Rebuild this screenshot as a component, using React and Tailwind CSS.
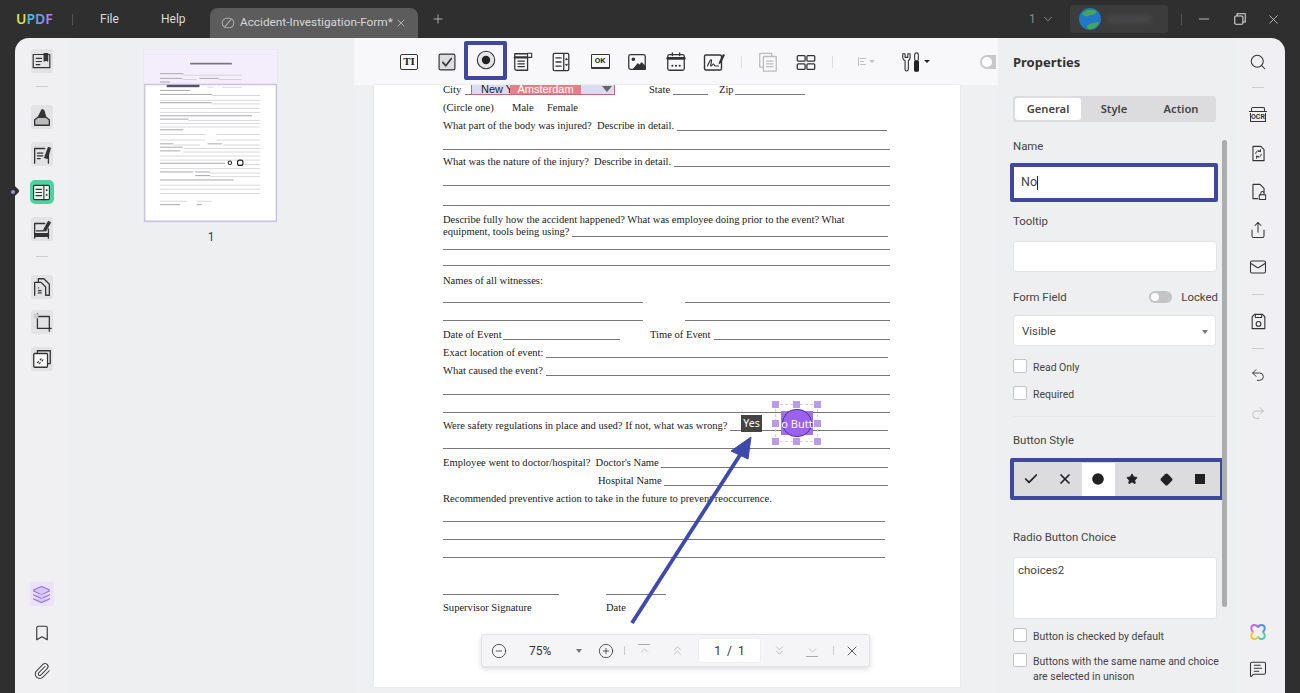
import React from "react";
import { X, Plus, Minus, ChevronDown, Check, Search, Undo2, Redo2, Bookmark, Paperclip, Layers, CirclePlus, CircleMinus, ChevronsUp, ChevronsDown, Share, Mail, MessageSquareText, Star, Diamond, Circle } from "lucide-react";

function Svg({ size = 24, children, className = "" }) {
  return (
    <svg width={size} height={size} viewBox="0 0 24 24" fill="none" stroke="#333" strokeWidth="1.4" strokeLinejoin="round" strokeLinecap="round" className={className}>
      {children}
    </svg>
  );
}

const toolbarIcons = {
  check: (
    <Svg size={20}>
      <rect x="2.5" y="2.5" width="19" height="19" rx="2" fill="#ddd" />
      <path d="M7 12.5l3.5 4L17 8" strokeWidth="2" />
    </Svg>
  ),
  radio: (
    <Svg size={22}>
      <circle cx="12" cy="12" r="9.5" fill="#e6e6e6" strokeWidth="1.2" />
      <circle cx="12" cy="12" r="4.6" fill="#222" stroke="none" />
    </Svg>
  ),
  combo: (
    <Svg size={22}>
      <path d="M3 3h14v18H5a2 2 0 0 1-2-2z" />
      <path d="M3 7h14" strokeWidth="2.4" />
      <rect x="17" y="2.5" width="4.5" height="4.5" fill="#fff" strokeWidth="1.2" />
      <path d="M6.5 11h7M6.5 14h7M6.5 17h7" />
    </Svg>
  ),
  list: (
    <Svg size={22}>
      <rect x="3.5" y="2.5" width="17" height="19" rx="1.5" />
      <path d="M15 3v18" />
      <path d="M6.5 7.5h5.5M6.5 12h5.5M6.5 16.5h5.5" />
      <path d="M17.8 8l-1 1.5h2zM17.8 16l-1-1.5h2z" fill="#333" strokeWidth="0.8" />
    </Svg>
  ),
  image: (
    <Svg size={22}>
      <rect x="3" y="4" width="18" height="16" rx="2" />
      <circle cx="8" cy="9" r="1.3" fill="#333" />
      <path d="M8 20l5-6 2 2 2-3 4 4v3z" fill="#333" />
    </Svg>
  ),
  date: (
    <Svg size={22}>
      <rect x="3" y="4" width="18" height="17" rx="2" />
      <path d="M3 8h18" strokeWidth="3" />
      <path d="M8 2v3M16 2v3" />
      <path d="M8 16h.1M12 16h.1M16 16h.1" strokeWidth="2.2" />
    </Svg>
  ),
  sign: (
    <Svg size={24}>
      <rect x="2.5" y="5" width="17" height="15" rx="1.5" />
      <path d="M5.5 16c2-5 3.5-7 4-6s-1.5 6-.5 6 1.5-2 2.5-2 .5 2 2 2h3" strokeWidth="1.2" />
      <path d="M17 12l4-8 2 1-4 8-2.5 1.5z" fill="#333" stroke="none" />
    </Svg>
  ),
  copy: (
    <Svg size={22} className="opacity-30">
      <rect x="3" y="2.5" width="13" height="15" />
      <rect x="7" y="6" width="14" height="16" fill="#f8f8fa" />
      <path d="M10.5 11h7M10.5 14h7M10.5 17h7" />
    </Svg>
  ),
  grid: (
    <Svg size={22}>
      <rect x="2.5" y="5" width="8.5" height="6" rx="1" />
      <rect x="13" y="5" width="8.5" height="6" rx="1" />
      <rect x="2.5" y="14" width="8.5" height="6" rx="1" />
      <rect x="13" y="14" width="8.5" height="6" rx="1" />
    </Svg>
  ),
};

function Tool({ className = "", children }) {
  return <div className={`flex shrink-0 items-center justify-center ${className}`}>{children}</div>;
}

function Toolbar() {
  return (
    <div className="relative flex h-[47px] shrink-0 items-center bg-[#f8f8fa] pl-[43px]">
      <Tool className="w-6">
        <div className="flex h-[16px] w-[18px] items-center justify-center rounded-[2px] border border-[#333] font-['Liberation_Serif',serif] text-[11px] leading-none font-bold text-[#222]">TI</div>
      </Tool>
      <Tool className="ml-[14px] w-6">{toolbarIcons.check}</Tool>
      <Tool className="mt-[-3px] ml-[5px] h-[39px] w-[43px] rounded-[2px] border-[4px] border-[#3f479f]">{toolbarIcons.radio}</Tool>
      <Tool className="ml-[4px] w-6">{toolbarIcons.combo}</Tool>
      <Tool className="ml-[14px] w-6">{toolbarIcons.list}</Tool>
      <Tool className="ml-[15px] w-6">
        <div className="flex h-[15px] w-[19px] items-center justify-center rounded-[1px] border border-b-2 border-[#333] text-[8px] leading-none font-semibold text-[#222]">OK</div>
      </Tool>
      <Tool className="ml-[13px] w-6">{toolbarIcons.image}</Tool>
      <Tool className="ml-[15px] w-6">{toolbarIcons.date}</Tool>
      <Tool className="ml-[14px] w-6">{toolbarIcons.sign}</Tool>
      <div className="ml-[15px] h-[12px] w-px bg-[#ddd]" />
      <Tool className="ml-[14px] w-6">{toolbarIcons.copy}</Tool>
      <Tool className="ml-[14px] w-6">{toolbarIcons.grid}</Tool>
      <div className="ml-[14px] h-[12px] w-px bg-[#ddd]" />
      <Tool className="ml-[21px] w-6 gap-[3px] opacity-30">
        <div className="flex flex-col gap-[2px] border-l border-[#444] py-px pl-px">
          <div className="h-px w-[6px] bg-[#444]" />
          <div className="h-px w-[4px] bg-[#444]" />
          <div className="h-px w-[6px] bg-[#444]" />
        </div>
        <div className="h-0 w-0 border-x-[3px] border-t-[3px] border-x-transparent border-t-[#444]" />
      </Tool>
      <Tool className="ml-[22px] w-[30px] gap-[2px]">
        <Svg size={24}>
          <path d="M3 3v4a4 4 0 0 0 2.5 3.5V20a1.8 1.8 0 0 0 3.6 0V10.5A4 4 0 0 0 11 7V3L8.5 3v4h-3V3z" strokeWidth="1.2" />
          <rect x="16" y="2" width="4" height="9" rx="2" strokeWidth="1.2" />
          <rect x="16" y="11" width="4" height="11" rx="1" fill="#222" stroke="#222" />
        </Svg>
        <div className="h-0 w-0 border-x-[3px] border-t-[3px] border-x-transparent border-t-[#222]" />
      </Tool>
      <div className="ml-[50px] flex h-[14px] w-[16px] items-center rounded-l-full bg-[#c9c9cb] pl-[2px]">
        <div className="h-[10px] w-[10px] rounded-full bg-white" />
      </div>
    </div>
  );
}

function Rule({ className = "" }) {
  return <div className={`h-px bg-[#777] ${className}`} />;
}

function U({ className = "" }) {
  return <span className={`h-px bg-[#777] ${className || "flex-1"}`} />;
}

function Row({ className = "", children }) {
  return <div className={`flex h-3 items-end whitespace-pre leading-[10px] ${className}`}>{children}</div>;
}

function DocPage() {
  return (
    <div className="relative ml-5 h-[602px] w-[586px] overflow-hidden bg-white pl-[69px] font-['Liberation_Serif',serif] text-[10.55px] text-[#222] shadow-[0_0_2px_#ddd]">
      <div className="w-[447px]">
        <Row className="mt-[-2px]">
          <span className="w-[22px]">City</span>
          <U className="w-[6px]" />
          <div className="flex h-[11px] w-[144px] items-center border-x border-b border-[#c8667a] bg-[#d9dcf2] font-['Liberation_Sans',sans-serif] text-[11px] leading-none">
            <span className="ml-[9px] w-[29px] overflow-hidden text-[#222]">New Y</span>
            <span className="flex h-full w-[71px] items-center justify-center bg-[#e77f88] text-[#fff]">Amsterdam</span>
            <div className="ml-[21px] h-0 w-0 border-x-[5px] border-t-[6px] border-x-transparent border-t-[#666]" />
          </div>
          <span className="ml-[34px] w-[24px]">State</span>
          <U className="w-[35px]" />
          <span className="ml-[11px] w-[16px]">Zip</span>
          <U className="w-[70px]" />
        </Row>
        <Row className="mt-[6px]">
          <span className="w-[69px]">(Circle one)</span>
          <span className="w-[35px]">Male</span>
          <span>Female</span>
        </Row>
        <Row className="mt-[6px]">
          <span>What part of the body was injured?  Describe in detail. </span>
          <U className="mr-[3px] flex-1" />
        </Row>
        <Rule className="mt-[18px]" />
        <Row className="mt-[5px]">
          <span>What was the nature of the injury?  Describe in detail. </span>
          <U />
        </Row>
        <Rule className="mt-[18px]" />
        <Rule className="mt-[19px] bg-[#444]" />
        <Row className="mt-[7px]">
          <span>Describe fully how the accident happened? What was employee doing prior to the event? What</span>
        </Row>
        <Row>
          <span>equipment, tools being using? </span>
          <U className="mr-[2px] flex-1" />
        </Row>
        <Rule className="mt-[12px]" />
        <Rule className="mt-[15px]" />
        <Row className="mt-[8px]">
          <span>Names of all witnesses:</span>
        </Row>
        <div className="mt-[16px] flex gap-[42px]">
          <Rule className="w-[200px]" />
          <Rule className="flex-1" />
        </div>
        <div className="mt-[17px] flex gap-[42px]">
          <Rule className="w-[200px]" />
          <Rule className="flex-1" />
        </div>
        <Row className="mt-[7px]">
          <span className="w-[60px]">Date of Event </span>
          <U className="w-[117px]" />
          <span className="ml-[30px] w-[64px]">Time of Event </span>
          <U />
        </Row>
        <Row className="mt-[6px]">
          <span>Exact location of event: </span>
          <U className="mr-[2px] flex-1" />
        </Row>
        <Row className="mt-[6px]">
          <span>What caused the event? </span>
          <U />
        </Row>
        <Rule className="mt-[18px]" />
        <Rule className="mt-[17px]" />
        <Row className="mt-[6px]">
          <span>Were safety regulations in place and used? If not, what was wrong? </span>
          <U className="mr-[2px] flex-1" />
        </Row>
        <Rule className="mt-[17px]" />
        <Row className="mt-[7px]">
          <span>Employee went to doctor/hospital?  Doctor's Name </span>
          <U className="mr-[2px] flex-1" />
        </Row>
        <Row className="mt-[6px]">
          <span className="ml-[155px]">Hospital Name </span>
          <U className="mr-[2px] flex-1" />
        </Row>
        <Row className="mt-[6px]">
          <span>Recommended preventive action to take in the future to prevent reoccurrence.</span>
        </Row>
        <Rule className="mt-[17px] mr-[5px]" />
        <Rule className="mt-[17px] mr-[5px]" />
        <Rule className="mt-[17px] mr-[5px]" />
        <div className="mt-[36px] flex gap-[47px]">
          <Rule className="w-[116px]" />
          <Rule className="w-[60px]" />
        </div>
        <Row className="mt-[6px]">
          <span className="w-[163px]">Supervisor Signature</span>
          <span>Date</span>
        </Row>
      </div>
      <FieldOverlay />
    </div>
  );
}

function Handle({ className }) {
  return <div className={`absolute h-[7px] w-[7px] bg-[#bb9be8] ${className}`} />;
}

// the Yes label and the selected radio button sit on top of the page
function FieldOverlay() {
  return (
    <>
      <div className="absolute top-[330px] left-[367px] flex h-[17px] w-[21px] items-center justify-center bg-[#444] font-['Noto_Sans',sans-serif] text-[10.5px] leading-none text-white">Yes</div>
      <div className="absolute top-[319px] left-[401px] h-[38px] w-[43px] border border-dashed border-[#d9c9f3]" />
      <Handle className="top-[316px] left-[398px]" />
      <Handle className="top-[316px] left-[419px]" />
      <Handle className="top-[316px] left-[440px]" />
      <Handle className="top-[335px] left-[398px]" />
      <Handle className="top-[335px] left-[440px]" />
      <Handle className="top-[353px] left-[398px]" />
      <Handle className="top-[353px] left-[419px]" />
      <Handle className="top-[353px] left-[440px]" />
      <div className="absolute top-[326px] left-[407px] h-[24px] w-[32px] bg-[#a070e8]" />
      <div className="absolute top-[324px] left-[408px] h-[28px] w-[30px] rounded-full border border-[#4a3490] bg-[#9a62ee]" />
      <div className="absolute top-[326px] left-[407px] flex h-[24px] w-[32px] items-center justify-center overflow-hidden font-['Noto_Sans',sans-serif] text-[11px] leading-none text-white">
        <span className="whitespace-nowrap">o Butt</span>
      </div>
    </>
  );
}

function ArrowOverlay() {
  return (
    <svg width="140" height="200" viewBox="0 0 140 200" className="absolute top-[350px] left-[265px]">
      <path d="M13 188L121 20" stroke="#3d49ad" strokeWidth="3.8" />
      <path d="M132 2L112 16 129 24z" fill="#3d49ad" stroke="#3d49ad" strokeWidth="1" />
    </svg>
  );
}

function ZoomBar() {
  return (
    <div className="absolute top-[549px] left-[127px] flex h-[33px] w-[389px] items-center rounded-[3px] border border-[#e3e3e5] bg-[#f5f5f7] text-[#333] shadow-[0_2px_5px_rgba(0,0,0,0.15)]">
      <CircleMinus size={16} strokeWidth={1.2} className="ml-[9px]" />
      <span className="ml-[22px] w-[24px] text-[12px]">75%</span>
      <div className="ml-[23px] h-0 w-0 border-x-[3px] border-t-[4px] border-x-transparent border-t-[#777]" />
      <CirclePlus size={16} strokeWidth={1.2} className="ml-[16px]" />
      <div className="ml-[10px] h-[9px] w-px bg-[#ccc]" />
      <div className="ml-[12px] flex w-[14px] flex-col items-center text-[#aaa]">
        <div className="h-px w-[12px] bg-[#aaa]" />
        <ChevronDown size={13} strokeWidth={1.2} className="mt-[-1px] rotate-180" />
      </div>
      <ChevronsUp size={15} strokeWidth={1.2} className="ml-[19px] text-[#aaa]" />
      <div className="ml-[13px] flex h-[25px] w-[63px] items-center justify-center gap-[6px] rounded-[3px] border border-[#eee] bg-white text-[12px]">
        <span>1</span>
        <span>/</span>
        <span>1</span>
      </div>
      <ChevronsDown size={15} strokeWidth={1.2} className="ml-[11px] text-[#aaa]" />
      <div className="ml-[18px] flex w-[14px] flex-col items-center text-[#aaa]">
        <ChevronDown size={13} strokeWidth={1.2} />
        <div className="mt-[-1px] h-px w-[12px] bg-[#aaa]" />
      </div>
      <div className="ml-[14px] h-[9px] w-px bg-[#ccc]" />
      <X size={16} strokeWidth={1.2} className="ml-[10px]" />
    </div>
  );
}

function RailBtn({ className = "", children }) {
  return <div className={`flex h-[24px] w-[22px] items-center justify-center rounded-[3px] bg-[#e3e3e5] ${className}`}>{children}</div>;
}

function LeftRail() {
  return (
    <div className="flex w-[53px] shrink-0 flex-col items-center bg-[#f0f0f2]">
      <RailBtn className="mt-[11px]">
        <Svg size={21}>
          <path d="M2.5 4h19v15h-19z" />
          <path d="M6 8.5h6M6 12h6M6 15.5h4" />
          <path d="M15 3v8.5l2-1.5 2 1.5V3z" fill="#333" />
        </Svg>
      </RailBtn>
      <div className="mt-[13px] h-px w-[12px] bg-[#ccc]" />
      <RailBtn className="mt-[18px]">
        <Svg size={22}>
          <path d="M4 21v-6l4-3h8l4 3v6z" fill="#bbb" />
          <path d="M8 12l4-8 2 1 2 7z" fill="#333" />
        </Svg>
      </RailBtn>
      <RailBtn className="mt-[13px]">
        <Svg size={22}>
          <path d="M4 22V6h11M19 12v10" />
          <path d="M7 11h6M7 14h6M7 17h3" />
          <path d="M15 16l4-11 2 .7-3 11z" fill="#333" />
        </Svg>
      </RailBtn>
      <div className="mt-[14px] flex h-[24px] w-[24px] items-center justify-center rounded-[5px] bg-[#4ed1a0]">
        <Svg size={19}>
          <rect x="2" y="3" width="20" height="18" rx="1.5" fill="#e6f7ef" />
          <path d="M15 3v18M5 8h7M5 12h7M5 16h7" />
          <path d="M18.5 9h.1M18.5 15h.1" strokeWidth="2.2" />
        </Svg>
      </div>
      <RailBtn className="mt-[13px]">
        <Svg size={22}>
          <path d="M4 22V6h11M19 12v10" />
          <path d="M6 14h8" />
          <path d="M4 17h15v3H4z" fill="#333" />
          <path d="M14 13l5-9 2 1-5 9z" fill="#333" />
        </Svg>
      </RailBtn>
      <div className="mt-[15px] h-px w-[12px] bg-[#ccc]" />
      <RailBtn className="mt-[18px]">
        <Svg size={22}>
          <path d="M8 7V3h6l6 6v12h-3" />
          <path d="M4 21V7h7l5 5v9" />
          <path d="M8 13h.1M8 16h3M8 18.5h3" />
        </Svg>
      </RailBtn>
      <RailBtn className="mt-[11px]">
        <Svg size={22}>
          <path d="M4 6h16v16M7 3v16h15" />
          <rect x="3" y="3" width="5" height="5" fill="#ccc" stroke="none" />
        </Svg>
      </RailBtn>
      <RailBtn className="mt-[13px]">
        <Svg size={22}>
          <path d="M7 6V3h14v14h-3" />
          <rect x="3" y="6" width="15" height="15" rx="1" fill="#fff" />
          <path d="M7 16l1-1M10 13l1-1M9 17l1-1M12 14l1-1" />
        </Svg>
      </RailBtn>
      <div className="mt-auto flex h-[24px] w-[24px] items-center justify-center rounded-[3px] bg-[#ebe1fa]">
        <Layers size={19} strokeWidth={1.3} className="fill-[#d9c6f5] text-[#8e70c9]" />
      </div>
      <Bookmark size={18} strokeWidth={1.5} className="mt-[18px] text-[#333]" />
      <Paperclip size={18} strokeWidth={1.4} className="mt-[20px] mb-[13px] text-[#444]" />
    </div>
  );
}

// x1, x2, y in the thumbnail's own units, dark = printed words, light = form lines
const thumbText = [
  [90, 160, 102], [90, 155, 116], [208, 265, 116], [90, 120, 127], [90, 180, 152], [90, 245, 164], [90, 245, 189],
  [90, 365, 228], [90, 175, 238], [90, 160, 270], [90, 130, 312], [232, 275, 312], [90, 158, 322], [90, 150, 333],
  [90, 285, 370], [90, 190, 396], [195, 240, 396], [195, 240, 407], [90, 310, 420], [90, 150, 494], [200, 215, 494],
];
const thumbLines = [
  [160, 335, 106], [155, 200, 119], [265, 335, 119], [232, 250, 142], [275, 335, 142], [245, 390, 167], [90, 390, 181],
  [245, 390, 192], [90, 390, 205], [90, 390, 217], [175, 390, 241], [90, 390, 250], [90, 390, 261], [90, 225, 283],
  [258, 390, 283], [90, 225, 300], [258, 390, 300], [130, 210, 315], [278, 390, 315], [160, 390, 325], [160, 390, 336],
  [90, 390, 348], [90, 390, 360], [340, 390, 373], [90, 390, 386], [240, 390, 399], [240, 390, 410], [90, 390, 435],
  [90, 390, 447], [90, 390, 460], [90, 170, 483], [200, 245, 483],
];

function Thumbs() {
  return (
    <div className="flex w-[286px] shrink-0 flex-col items-center bg-[#eeeff1] pt-[11px]">
      <div className="ml-[-1px] bg-[#e9e6f6] p-[1px]">
        <svg width="133" height="172" viewBox="42 32 398 514" className="block">
          <rect x="42" y="32" width="398" height="514" fill="#fff" />
          <rect x="42" y="32" width="398" height="103" fill="#f4eefc" />
          <path d="M44 135H438V544H44z" fill="none" stroke="#c9c2e4" strokeWidth="4" />
          <rect x="180" y="70" width="125" height="5" fill="#77737f" />
          {thumbText.map((l, i) => (
            <rect key={i} x={l[0]} y={l[2] - 1} width={l[1] - l[0]} height="3" fill="#a9a9ad" />
          ))}
          {thumbLines.map((l, i) => (
            <rect key={i} x={l[0]} y={l[2]} width={l[1] - l[0]} height="2" fill="#c8c8cb" />
          ))}
          <rect x="110" y="136" width="98" height="7" fill="#55536a" />
          <circle cx="299" cy="369" r="5" fill="none" stroke="#222" strokeWidth="3" />
          <rect x="322" y="361" width="16" height="16" rx="6" fill="none" stroke="#222" strokeWidth="3.5" />
        </svg>
      </div>
      <span className="mt-[6px] text-[12px] leading-4 text-[#444]">1</span>
    </div>
  );
}

function Checkbox({ label, className = "" }) {
  return (
    <div className={`flex items-start gap-[6px] ${className}`}>
      <div className="h-[14px] w-[14px] shrink-0 rounded-[2px] border border-[#c4c4c6] bg-white" />
      <span className="pt-px text-[10.45px] leading-[15px] text-[#444]">{label}</span>
    </div>
  );
}

function StyleBtn({ active, children }) {
  return <div className={`flex h-[33px] w-[33.8px] items-center justify-center ${active ? "bg-white" : ""}`}>{children}</div>;
}

function Properties() {
  return (
    <div className="relative flex w-[237px] shrink-0 flex-col bg-[#eeeff1] pl-[15px] text-[#444]">
      <div className="mt-[14px] font-['Noto_Sans',sans-serif] text-[13px] leading-[20px] font-bold text-[#333]">Properties</div>
      <div className="mt-[24px] flex h-[26px] w-[203px] items-center rounded-[3px] bg-[#dcdcde] pl-[2px] font-['Noto_Sans',sans-serif] text-[11.2px] font-semibold text-[#444]">
        <div className="flex h-[22px] w-[66px] items-center justify-center rounded-[3px] bg-white">General</div>
        <div className="w-[66px] text-center">Style</div>
        <div className="w-[68px] text-center">Action</div>
      </div>
      <div className="mt-[16px] text-[11.4px] leading-4">Name</div>
      <div className="mt-[9px] ml-[-3px] flex h-[39px] w-[208px] items-center rounded-[2px] border-[4px] border-[#3f479f] bg-white pl-[7px] text-[12.5px] text-[#444]">
        <span>No</span>
        <div className="h-[14px] w-px bg-[#222]" />
      </div>
      <div className="mt-[11px] text-[11.4px] leading-4">Tooltip</div>
      <div className="mt-[12px] h-[31px] w-[204px] rounded-[3px] border border-[#e4e4e6] bg-white" />
      <div className="mt-[17px] flex w-[205px] items-center text-[11.4px] leading-4">
        <span>Form Field</span>
        <div className="mr-[9px] ml-auto flex h-[12px] w-[23px] items-center rounded-full bg-[#c4c4c6] pl-[2px]">
          <div className="h-[8px] w-[8px] rounded-full bg-white" />
        </div>
        <span>Locked</span>
      </div>
      <div className="mt-[10px] flex h-[31px] w-[203px] items-center justify-between rounded-[3px] border border-[#e4e4e6] bg-white pt-[3px] pr-[7px] pl-[8px] text-[11.4px]">
        <span>Visible</span>
        <div className="h-0 w-0 border-x-[3px] border-t-[4px] border-x-transparent border-t-[#777]" />
      </div>
      <Checkbox label="Read Only" className="mt-[13px]" />
      <Checkbox label="Required" className="mt-[11px]" />
      <div className="mt-[14px] h-px w-[203px] bg-[#e8e8ea]" />
      <div className="mt-[15px] text-[11.4px] leading-4">Button Style</div>
      <div className="mt-[10px] ml-[-3px] flex h-[42px] w-[214px] items-center rounded-[2px] border-[4px] border-[#3f479f] bg-[#dcdcde] text-[#222]">
        <StyleBtn><Check size={16} strokeWidth={2.6} /></StyleBtn>
        <StyleBtn><X size={16} strokeWidth={2.6} /></StyleBtn>
        <StyleBtn active><Circle size={14} fill="currentColor" strokeWidth={0} /></StyleBtn>
        <StyleBtn><Star size={12} fill="currentColor" /></StyleBtn>
        <StyleBtn><Diamond size={13} fill="currentColor" /></StyleBtn>
        <StyleBtn><div className="h-[10px] w-[10px] bg-current" /></StyleBtn>
      </div>
      <div className="mt-[29px] text-[11.4px] leading-4">Radio Button Choice</div>
      <div className="mt-[12px] h-[62px] w-[204px] rounded-[3px] border border-[#e4e4e6] bg-white pt-[4px] pl-[4px] text-[11.5px] leading-4">choices2</div>
      <Checkbox label="Button is checked by default" className="mt-[9px]" />
      <Checkbox label={<>Buttons with the same name and choice<br />are selected in unison</>} className="mt-[9px]" />
      <div className="absolute top-[102px] left-[224px] h-[467px] w-[5px] rounded-full bg-[#acacae]" />
    </div>
  );
}

function RightRail() {
  const ic = "text-[#333]";
  return (
    <div className="flex w-[50px] shrink-0 flex-col items-center bg-[#f0f0f2] pr-[4px]">
      <Search size={18} strokeWidth={1.4} className={`mt-[15px] ${ic}`} />
      <div className="mt-[16px] h-px w-[12px] bg-[#ccc]" />
      <div className="mt-[19px] flex flex-col items-center">
        <div className="h-[4px] w-[14px] rounded-t-[2px] border-x border-t border-[#333]" />
        <div className="h-px w-[18px] bg-[#333]" />
        <div className="mt-px flex h-[9px] w-[16px] items-center justify-center border-x border-b border-[#333] text-[7px] leading-none font-bold text-[#333]">OCR</div>
      </div>
      <Svg size={19} className="mt-[22px]">
        <path d="M5 3h10l4 4v14H5z" />
        <path d="M8.5 12a3.5 3.5 0 0 1 6-2.5M15.5 13a3.5 3.5 0 0 1-6 2.5M14.5 7v2.5H12M9.5 18v-2.5H12" strokeWidth="1.2" />
      </Svg>
      <Svg size={19} className="mt-[19px]">
        <path d="M11 21H5V3h9l5 5v5" />
        <rect x="13" y="16" width="8" height="6" fill="#f0f0f2" strokeWidth="1.3" />
        <path d="M15 16v-2a2 2 0 0 1 4 0v2" strokeWidth="1.3" />
      </Svg>
      <Share size={18} strokeWidth={1.4} className={`mt-[20px] ${ic}`} />
      <Mail size={18} strokeWidth={1.4} className={`mt-[19px] ${ic}`} />
      <div className="mt-[18px] h-px w-[12px] bg-[#ccc]" />
      <Svg size={19} className="mt-[17px]">
        <path d="M7 3h10l3 3v15H4V6z" />
        <path d="M8 3v4h8V3" strokeWidth="1.3" />
        <circle cx="12" cy="15" r="3" />
      </Svg>
      <div className="mt-[17px] h-px w-[12px] bg-[#ccc]" />
      <Undo2 size={16} strokeWidth={1.4} className={`mt-[18px] ${ic}`} />
      <Redo2 size={16} strokeWidth={1.4} className="mt-[22px] text-[#bbb]" />
      <svg width="18" height="18" viewBox="0 0 24 24" fill="none" strokeWidth="2.6" className="mt-auto">
        <path d="M12 6C10 1 3 2 3 7c0 2 1 4 3 5" stroke="#c26ae0" />
        <path d="M12 6c2-5 9-4 9 1 0 2-1 4-3 5" stroke="#5a8de8" />
        <path d="M18 12c2 1 3 3 3 5 0 5-7 6-9 1" stroke="#4ec9b0" />
        <path d="M6 12c-2 1-3 3-3 5 0 5 7 6 9 1" stroke="#f0c640" />
      </svg>
      <MessageSquareText size={18} strokeWidth={1.4} className={`mt-[19px] mb-[15px] ${ic}`} />
    </div>
  );
}

function TitleBar() {
  return (
    <div className="flex h-[38px] shrink-0 items-center bg-[#2f2f30] text-[12px] text-[#dcdcdc]">
      <div className="ml-[16px] flex w-[37px] font-['Noto_Sans',sans-serif] text-[14px] leading-none font-semibold">
        <span className="text-[#dfe04a]">U</span>
        <span className="text-[#52b8e0]">P</span>
        <span className="text-[#6f9ee8]">D</span>
        <span className="text-[#a884ea]">F</span>
      </div>
      <div className="ml-[19px] h-[11px] w-px bg-[#555]" />
      <span className="ml-[27px] w-[18px]">File</span>
      <span className="ml-[43px] w-[25px]">Help</span>
      <div className="ml-[24px] flex h-[30px] w-[208px] items-center self-end rounded-t-[8px] bg-[#5c5c5d] pl-[11px]">
        <svg width="14" height="14" viewBox="0 0 24 24" fill="none" stroke="#aaa" strokeWidth="1.8">
          <rect x="2" y="4" width="20" height="16" rx="8" />
          <path d="M6 19L18 5" />
        </svg>
        <span className="ml-[5px] w-[149px] whitespace-nowrap text-[11.8px] text-[#d8d8d8]">Accident-Investigation-Form*</span>
        <X size={12} strokeWidth={1.4} className="ml-[6px] text-[#cfcfcf]" />
      </div>
      <Plus size={14} strokeWidth={1.3} className="ml-[13px] text-[#cfcfcf]" />
      <span className="ml-[584px] w-[7px] text-[#8a8a8a]">1</span>
      <ChevronDown size={14} strokeWidth={1.3} className="ml-[5px] text-[#aaa]" />
      <div className="ml-[15px] flex h-[28px] w-[98px] items-center rounded-[3px] bg-[#3c3c3d] pl-[9px]">
        <svg width="22" height="22" viewBox="0 0 22 22">
          <circle cx="11" cy="11" r="11" fill="#1f78c8" />
          <path d="M3 6c4-5 10-5 14-3 1 3-3 4-6 4-2 2-5 2-8-1zM8 18c3-3 8-4 12-4-1 4-6 8-11 7z" fill="#47a55a" />
        </svg>
        <div className="ml-[6px] h-[5px] w-[44px] bg-[#4f4f50] blur-[3px]" />
      </div>
      <div className="ml-[13px] h-[11px] w-px bg-[#555]" />
      <Minus size={16} strokeWidth={1.2} className="ml-[14px] text-[#ddd]" />
      <svg width="14" height="14" viewBox="0 0 24 24" fill="none" stroke="#ddd" strokeWidth="1.8" className="ml-[21px]">
        <path d="M7 7V3h14v14h-4" />
        <rect x="3" y="7" width="14" height="14" rx="2" />
      </svg>
      <X size={15} strokeWidth={1.2} className="ml-[19px] text-[#ddd]" />
    </div>
  );
}

export default function App() {
  return (
    <div className="relative flex h-[693px] w-[1300px] flex-col overflow-hidden bg-[#2f2f30] font-['Roboto',sans-serif]">
      <TitleBar />
      <div className="mx-[15px] flex min-h-0 flex-1 overflow-hidden rounded-t-[14px]">
        <LeftRail />
        <Thumbs />
        <div className="flex w-[644px] shrink-0 flex-col bg-[#eff0f2]">
          <Toolbar />
          <div className="relative min-h-0 flex-1">
            <DocPage />
            <ArrowOverlay />
            <ZoomBar />
          </div>
        </div>
        <Properties />
        <RightRail />
      </div>
      <div className="absolute top-[184px] left-[3px] h-[14px] w-[14px] rotate-45 rounded-[2px] bg-[#2f2f30]" />
      <div className="absolute top-[190px] left-[11px] h-[4px] w-[4px] rounded-full bg-[#9a94c8]" />
    </div>
  );
}
